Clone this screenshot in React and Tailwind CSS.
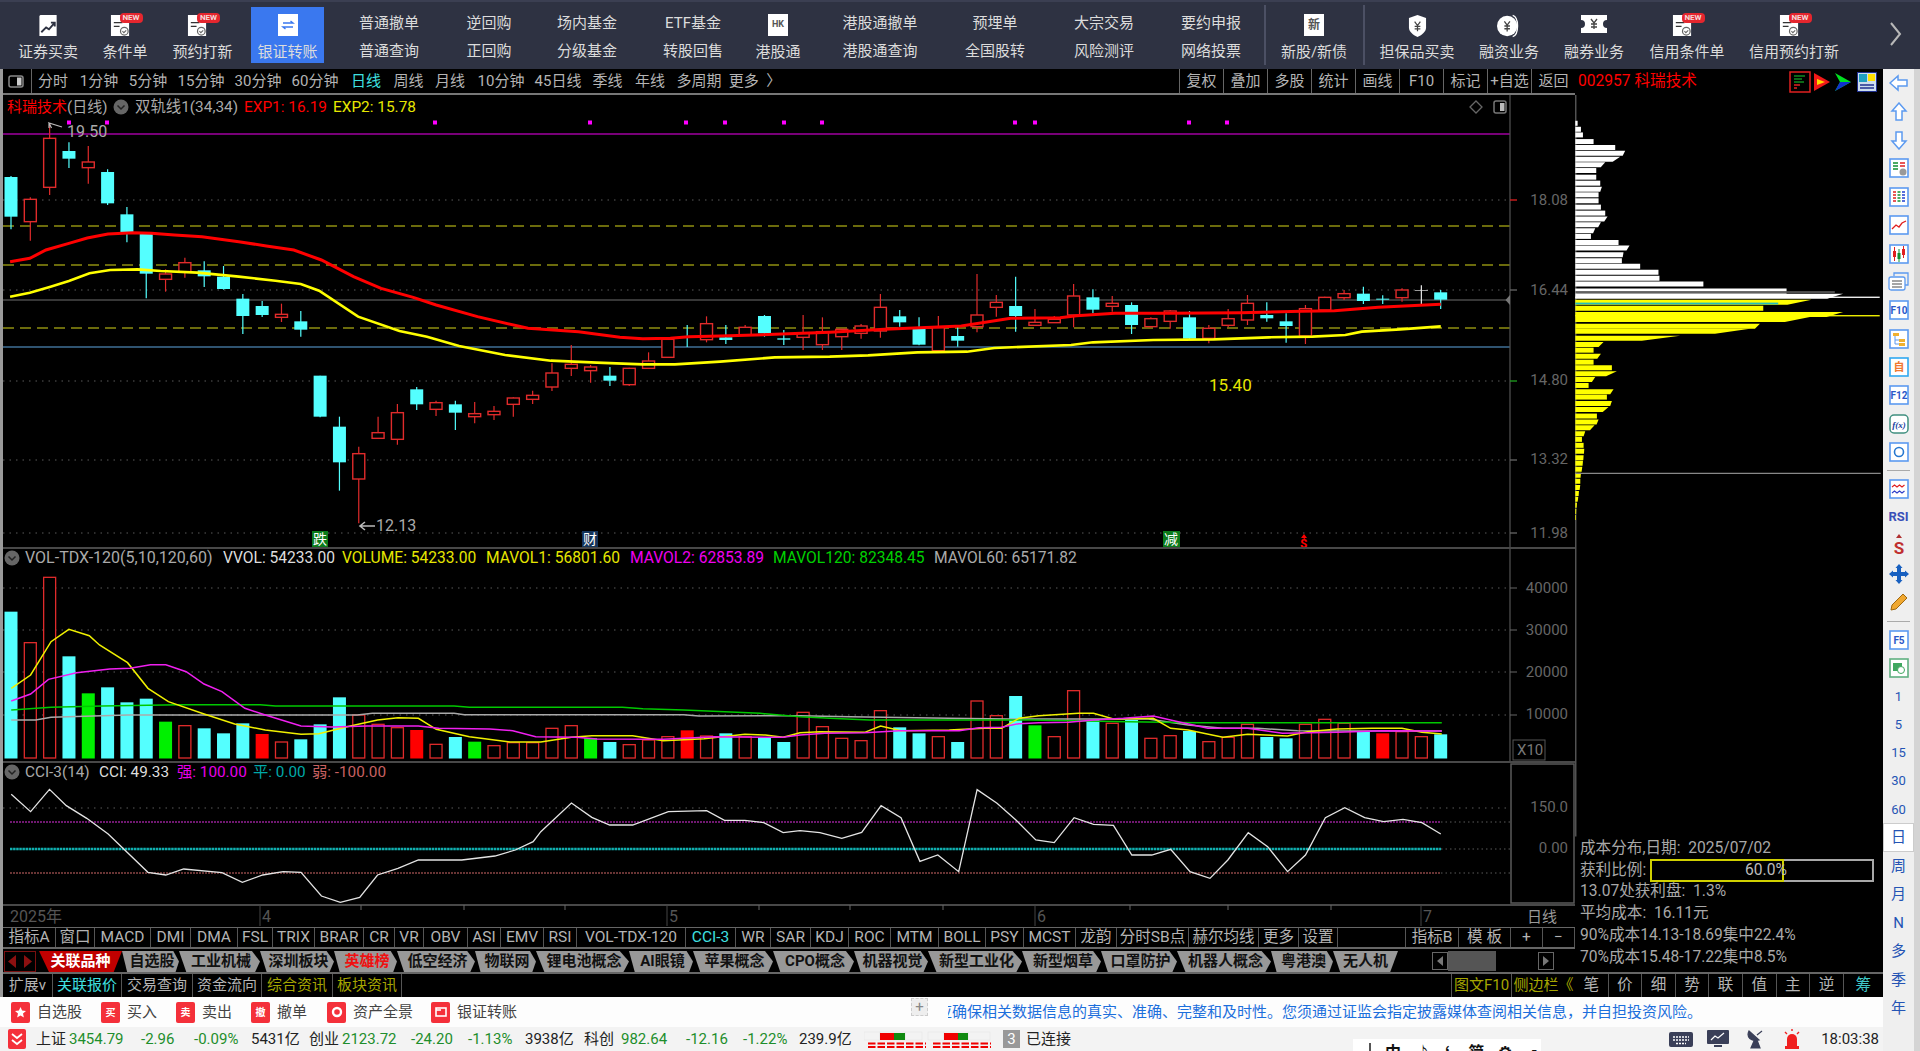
import React from "react";

const UP = "#e02b2b";
const CY = "#54ffff";

// [type, bodyTop, bodyBottom, wickTop, wickBottom]  y values read from the zoomed crops
const candlesA = [
  ["c",231,350,228,388],["r",298,365,292,422],["r",115,262,70,285],["c",153,176,127,204],["r",186,203,138,251],
  ["c",216,310,208,315],["c",343,397,321,427],["c",402,521,402,595],["r",522,538,508,575],["r",488,515,473,533],
  ["c",511,529,484,561],["c",530,567,498,569],["c",596,648,582,702],["c",618,645,603,651],["r",643,652,611,666],
  ["c",664,689,633,710],["c",827,950,827,952],["c",980,1087,950,1172],["r",1061,1137,1040,1270],["r",998,1015,950,1015],
  ["r",938,1018,912,1034],["c",868,913,861,930],["r",908,928,902,948],["c",913,938,902,990],["r",941,950,906,970],
  ["r",934,944,918,960],["r",894,913,892,950],["r",886,898,872,912],["r",819,861,790,873],["r",793,805,735,828],
  ["r",801,812,795,848],["c",827,842,801,858],["r",805,854,803,858],["r",783,805,757,806],["r",718,772,718,772],
  ["c",709,712,675,741],["r",671,719,649,727],
  ["c",712,720,675,732],["r",682,705,675,706],["c",648,700,645,710],["c",715,719,690,735],["r",698,712,645,750],
  ["r",695,734,652,750],["r",688,710,688,750],["r",678,700,672,716],["r",622,693,582,713],["c",649,667,630,680],
  ["c",685,734,652,736],["r",683,752,648,752],["c",708,722,680,740],["r",645,680,522,697],["r",607,622,585,650],
  ["c",618,648,530,695],["r",667,676,627,677],["r",658,668,648,668],["r",588,645,552,682],["c",592,629,568,640],
  ["r",610,619,588,635],["c",615,675,607,702],["r",656,680,652,682],["r",633,664,630,686],["c",652,716,633,718],
  ["r",685,715,675,730],["r",656,676,627,682],["r",610,660,585,675],["c",645,655,607,665],["c",664,678,640,728],
  ["r",626,708,615,732],["r",592,630,590,632],["r",581,593,570,600],["c",581,603,560,612],["c",596,599,586,612],
  ["r",570,593,565,605],["w",571,573,556,612],["c",577,599,570,627],
];

const volTops = [
  ["c",215],["r",308],["r",112],["c",349],["g",460],["c",442],["c",487],["c",476],["g",545],["r",557],["c",565],["c",580],
  ["c",550],["f",582],["r",606],["c",598],["c",553],["c",472],["r",525],["r",553],["r",563],["f",570],["r",613],["c",591],
  ["g",605],["r",617],["r",608],["r",608],["r",565],["r",557],["g",594],["c",606],["r",614],["r",600],["r",590],["f",571],
  ["r",588],["c",580],["r",590],["c",592],["c",606],["r",517],["r",560],["r",595],["r",602],["r",512],["c",562],["c",580],
  ["r",590],["c",606],["r",483],["r",527],["c",468],["g",556],["r",590],["r",452],["c",540],["r",550],["c",540],["r",595],
  ["r",587],["c",573],["r",605],["r",592],["r",553],["c",591],["c",595],["r",553],["r",538],["r",550],["c",575],["f",580],
  ["r",575],["r",590],["c",583],
];

const z8 = (x) => x / 2.178;
const z9 = (x) => x / 1.823 + 720;
const z10 = (x) => x / 1.96;
const z11 = (x) => x / 2.01 + 800;

const path1 = (a, fa, b, fb, off) =>
  [...a.map(([x, y]) => `${fa(x)},${y / 3 + off}`), ...b.map(([x, y]) => `${fb(x)},${y / 3 + off}`)].join(" ");

const redLine = path1(
  [[22,485],[65,475],[100,450],[150,430],[190,414],[235,402],[290,398],[330,400],[380,405],[440,410],[520,425],[580,438],[640,450],[700,480],[770,530],[830,565],[900,592],[950,615],[1040,650],[1150,685],[1260,695],[1350,712],[1400,716],[1460,715],[1500,710]],
  z8,
  [[0,708],[100,703],[200,697],[300,688],[440,678],[530,655],[620,653],[650,647],[720,640],[820,640],[950,638],[1060,634],[1120,632],[1200,622],[1314,613]],
  z9, 100
);
const yellowLine = path1(
  [[22,590],[65,578],[110,560],[150,543],[195,520],[240,510],[300,508],[350,513],[430,518],[520,530],[600,542],[655,552],[695,572],[780,650],[870,693],[930,710],[1000,738],[1100,765],[1200,782],[1300,788],[1400,793],[1470,793]],
  z8,
  [[0,785],[100,772],[200,770],[270,766],[360,757],[450,755],[500,744],[640,735],[680,727],[790,720],[900,718],[1000,712],[1080,710],[1140,705],[1170,695],[1240,688],[1314,679]],
  z9, 100
);
const mavol1 = path1(
  [[22,445],[60,405],[100,305],[135,268],[175,287],[195,315],[250,368],[290,445],[330,485],[400,522],[460,552],[520,570],[590,583],[625,581],[680,560],[740,540],[780,533],[820,535],[855,568],[920,590],[1000,606],[1060,606],[1120,592],[1160,587],[1240,587],[1300,602],[1380,596],[1460,583],[1500,585],[1535,592]],
  z10,
  [[0,578],[40,575],[130,577],[162,558],[203,572],[300,570],[370,565],[405,565],[440,535],[480,527],[560,520],[590,520],[630,537],[710,535],[745,565],[780,570],[850,592],[900,583],[980,588],[1020,575],[1080,567],[1150,565],[1210,565],[1250,577],[1290,582]],
  z11, 540
);
const mavol2 = path1(
  [[22,483],[60,462],[95,418],[150,398],[215,387],[255,385],[295,374],[325,374],[365,395],[400,432],[435,455],[480,505],[520,525],[590,558],[650,561],[720,558],[820,558],[860,565],[960,567],[1005,572],[1050,590],[1130,592],[1170,597],[1300,598],[1400,590],[1535,592]],
  z10,
  [[0,585],[50,580],[130,578],[200,572],[320,572],[360,563],[405,562],[440,551],[480,548],[540,547],[590,540],[650,535],[710,528],[760,545],[820,565],[900,565],[970,580],[1080,577],[1170,572],[1290,573]],
  z11, 540
);
const mavol120 = path1(
  [[22,510],[100,502],[200,498],[350,494],[510,494],[540,498],[890,498],[920,502],[1220,502],[1260,506],[1340,510],[1490,520]],
  z10,
  [[0,530],[60,535],[140,540],[460,540],[660,545],[800,548],[1290,548]],
  z11, 540
);
const mavol60 = path1(
  [[22,540],[70,540],[100,532],[250,525],[700,525],[730,520],[890,520],[910,524],[1340,524],[1370,528]],
  z10,
  [[0,527],[100,530],[300,535],[420,537],[700,537],[780,555],[850,565],[920,565],[1000,572],[1290,573]],
  z11, 540
);
const cciLine = path1(
  [[22,763],[60,815],[97,748],[130,797],[170,835],[212,882],[290,997],[325,1005],[360,987],[435,998],[475,1027],[515,1005],[555,995],[590,997],[630,1068],[667,1087],[705,1072],[740,1005],[780,985],[820,960],[905,960],[970,948],[1010,930],[1045,905],[1060,875],[1120,789],[1160,832],[1195,855],[1240,855],[1310,815],[1385,812],[1420,841],[1460,841],[1497,848],[1535,878]],
  z10,
  [[0,872],[40,878],[84,895],[124,877],[163,797],[203,833],[241,964],[277,945],[319,995],[356,749],[396,790],[434,840],[474,900],[511,908],[551,833],[590,853],[630,856],[667,945],[707,945],[745,928],[784,995],[824,1015],[860,960],[901,878],[940,920],[980,995],[1016,945],[1056,833],[1095,803],[1135,833],[1173,845],[1212,838],[1250,848],[1288,882]],
  z11, 540
);

const chipRows = [
  [70,52],[88,62],[105,68],[125,100],[143,165],[160,195],[178,180],[195,135],[212,108],[232,108],[250,120],[268,125],[285,115],[303,115],[322,122],[340,135],[358,142],[375,122],[393,105],[410,92],[428,175],[445,208],[465,190],[483,185],[500,240],[518,295],[536,298],[553,430],[574,680],[590,850],
  [608,755],[626,610],[645,850],[660,750],[680,600],[695,570],[716,360],[735,130],[752,100],[770,122],[788,100],[805,155],[823,170],[840,105],[858,85],[877,160],[893,140],[912,155],[930,145],[950,110],[968,115],[985,103],[1003,75],[1020,65],[1038,70],[1056,72],[1075,70],[1092,68],[1110,66],[1128,62],[1146,60],[1165,60],[1183,56],[1200,54],[1218,50],[1237,48],[1255,47],
];

const CollapseDot = ({ x, y }) => (
  <g>
    <circle cx={x} cy={y} r="7.5" fill="#666" />
    <path d={`M${x - 3.5} ${y - 1.5}l3.5 3.5l3.5 -3.5`} fill="none" stroke="#222" strokeWidth="1.5" />
  </g>
);

const MainChart = () => {
  const ticks = [200, 290, 381, 460, 533];
  const volGrid = [588, 630, 672, 715];
  return (
    <svg width="1572" height="832" viewBox="3 95 1572 832" className="block" fontFamily="Roboto, 'Noto Sans CJK SC', sans-serif" fontSize="15">
      {/* price grid */}
      {ticks.map((y) => (
        <line key={y} x1="3" x2="1510" y1={y} y2={y} stroke="#5a5a5a" strokeDasharray="1.5 5" />
      ))}
      <line x1="3" x2="1510" y1="134" y2="134" stroke="#a000a0" strokeWidth="1.6" />
      {[226, 265, 328].map((y) => (
        <line key={y} x1="3" x2="1510" y1={y} y2={y} stroke="#8f8f10" strokeWidth="1.3" strokeDasharray="11 6" />
      ))}
      <line x1="3" x2="1510" y1="300" y2="300" stroke="#4a4a4a" strokeWidth="1.3" />
      <line x1="3" x2="1510" y1="347" y2="347" stroke="#3f6f96" strokeWidth="1.4" />
      {[69, 107, 435, 590, 686, 725, 784, 822, 1015, 1035, 1189, 1227].map((x) => (
        <rect key={x} x={x - 2} y="120.5" width="4" height="4" fill="#ff00ff" />
      ))}

      {/* candles */}
      {candlesA.map(([t, top, bot, wt, wb], i) => {
        const x = 11 + i * 19.32;
        const c = t === "r" ? UP : t === "c" ? CY : "#e8e8e8";
        return (
          <g key={i}>
            <line x1={x} x2={x} y1={wt / 3 + 100} y2={wb / 3 + 100} stroke={c} strokeWidth="1.2" />
            {t === "r" ? (
              <rect x={x - 6} y={top / 3 + 100} width="12" height={(bot - top) / 3} fill="#000" stroke={c} strokeWidth="1.4" />
            ) : (
              <rect x={x - 6.5} y={top / 3 + 100} width="13" height={(bot - top) / 3} fill={c} />
            )}
          </g>
        );
      })}
      <polyline points={redLine} fill="none" stroke="#ff0000" strokeWidth="3" />
      <polyline points={yellowLine} fill="none" stroke="#ffff00" strokeWidth="2.6" />

      {/* price header */}
      <text x="7" y="112" fill="#ff0000">科瑞技术<tspan fill="#aaa">(日线)</tspan></text>
      <CollapseDot x={121} y={107} />
      <text x="135" y="112" fill="#aaa" fontSize="15.4">双轨线1(34,34)</text>
      <text x="244" y="112" fill="#ff0000" fontSize="15.4">EXP1: 16.19</text>
      <text x="333" y="112" fill="#e6e600" fontSize="15.4">EXP2: 15.78</text>

      {/* high / low marks */}
      <path d="M62 127L49 123l2.5 5M49 123l0 5" fill="none" stroke="#bbb" strokeWidth="1.2" />
      <text x="67" y="137" fill="#aaa" fontSize="16">19.50</text>
      <path d="M375 526h-15m5 -4l-5 4l5 4" fill="none" stroke="#bbb" strokeWidth="1.6" />
      <text x="376" y="531" fill="#aaa" fontSize="16">12.13</text>
      <text x="1209" y="391" fill="#e6e600" fontSize="17">15.40</text>

      {/* event tags */}
      <rect x="312" y="531" width="16" height="16" fill="#0a7a1a" />
      <text x="313" y="544" fill="#fff" fontSize="14">跌</text>
      <rect x="582" y="531" width="16" height="16" fill="#14345a" />
      <text x="583" y="544" fill="#fff" fontSize="14">财</text>
      <rect x="1163" y="531" width="17" height="16" fill="#0a7a1a" />
      <text x="1164" y="544" fill="#fff" fontSize="14">减</text>
      <path d="M1304 534l3 4h-6z" fill="#f00" />
      <text x="1300" y="548" fill="#f00" fontSize="13" fontWeight="700">$</text>

      {/* top right toggles */}
      <path d="M1476 101l6 6l-6 6l-6 -6z" fill="none" stroke="#666" strokeWidth="1.3" />
      <rect x="1494" y="101" width="12" height="12" rx="2" fill="none" stroke="#777" strokeWidth="1.5" />
      <rect x="1500" y="103" width="4.5" height="8" fill="#bbb" />

      {/* price axis */}
      <line x1="1510" x2="1510" y1="95" y2="762" stroke="#4d4d4d" strokeWidth="1.3" />
      {ticks.map((y, i) => (
        <line key={y} x1="1510" x2="1517" y1={y} y2={y} stroke={i === 0 ? "#e02020" : i === 2 ? "#20a020" : "#666"} strokeWidth="1.3" />
      ))}
      {[["18.08", 205], ["16.44", 295], ["14.80", 385], ["13.32", 464], ["11.98", 538]].map(([t, y]) => (
        <text key={t} x="1568" y={y} textAnchor="end" fill="#666">{t}</text>
      ))}
      <path d="M1510 295l-4.5 5l4.5 5z" fill="#777" />
      <line x1="3" x2="1575" y1="548" y2="548" stroke="#484848" strokeWidth="2" />

      {/* volume pane */}
      <CollapseDot x={12} y={558} />
      <g fontSize="15.6">
        <text x="25" y="563" fill="#aaa" fontSize="16">VOL-TDX-120(5,10,120,60)</text>
        <text x="223" y="563" fill="#ddd">VVOL: 54233.00</text>
        <text x="342" y="563" fill="#e6e600">VOLUME: 54233.00</text>
        <text x="486" y="563" fill="#e6e600">MAVOL1: 56801.60</text>
        <text x="630" y="563" fill="#f000f0">MAVOL2: 62853.89</text>
        <text x="773" y="563" fill="#00d000">MAVOL120: 82348.45</text>
        <text x="934" y="563" fill="#aaa">MAVOL60: 65171.82</text>
      </g>
      {volGrid.map((y) => (
        <line key={y} x1="3" x2="1510" y1={y} y2={y} stroke="#5a5a5a" strokeDasharray="1.5 5" />
      ))}
      {volTops.map(([t, top], i) => {
        const x = 11 + i * 19.32;
        const y = top / 3 + 540;
        if (t === "r") return <rect key={i} x={x - 6} y={y} width="12" height={758 - y} fill="#000" stroke={UP} strokeWidth="1.3" />;
        return <rect key={i} x={x - 6.5} y={y} width="13" height={758.5 - y} fill={t === "c" ? CY : t === "g" ? "#00f000" : "#ff0000"} />;
      })}
      <polyline points={mavol60} fill="none" stroke="#aaa" strokeWidth="1.5" />
      <polyline points={mavol120} fill="none" stroke="#00c800" strokeWidth="1.5" />
      <polyline points={mavol1} fill="none" stroke="#f0f000" strokeWidth="1.5" />
      <polyline points={mavol2} fill="none" stroke="#f020f0" strokeWidth="1.5" />
      {[["40000", 593, 588], ["30000", 635, 630], ["20000", 677, 672], ["10000", 719, 715]].map(([t, y, l]) => (
        <g key={t}>
          <line x1="1510" x2="1517" y1={l} y2={l} stroke="#666" />
          <text x="1568" y={y} textAnchor="end" fill="#666">{t}</text>
        </g>
      ))}
      <rect x="1513" y="740" width="32" height="20" fill="none" stroke="#555" />
      <text x="1517" y="755" fill="#777">X10</text>
      <line x1="3" x2="1575" y1="762" y2="762" stroke="#484848" strokeWidth="2" />

      {/* CCI pane */}
      <CollapseDot x={12} y={772} />
      <g fontSize="15.3">
        <text x="25" y="777" fill="#aaa">CCI-3(14)</text>
        <text x="99" y="777" fill="#ddd">CCI: 49.33</text>
        <text x="177" y="777" fill="#e800e8">强: 100.00</text>
        <text x="253" y="777" fill="#00a8a8">平: 0.00</text>
        <text x="312" y="777" fill="#c86060">弱: -100.00</text>
      </g>
      <line x1="3" x2="1510" y1="808" y2="808" stroke="#5a5a5a" strokeDasharray="1.5 5" />
      <line x1="1441" x2="1510" y1="822" y2="822" stroke="#5a5a5a" strokeDasharray="1.5 3" />
      <line x1="1441" x2="1510" y1="849" y2="849" stroke="#5a5a5a" strokeDasharray="1.5 3" />
      <line x1="1441" x2="1510" y1="873" y2="873" stroke="#5a5a5a" strokeDasharray="1.5 3" />
      <line x1="10" x2="1441" y1="822" y2="822" stroke="#e030e0" strokeWidth="1.2" strokeDasharray="2 1" />
      <line x1="10" x2="1441" y1="849" y2="849" stroke="#10b0b0" strokeWidth="2.4" strokeDasharray="2.5 0.6" />
      <line x1="10" x2="1441" y1="873" y2="873" stroke="#d06868" strokeWidth="1.2" strokeDasharray="2 1" />
      <polyline points={cciLine} fill="none" stroke="#e4e4e4" strokeWidth="1.3" />
      <rect x="1511" y="764" width="63" height="139" fill="none" stroke="#5a5a5a" strokeWidth="1.5" />
      <text x="1568" y="812" textAnchor="end" fill="#666">150.0</text>
      <text x="1568" y="853" textAnchor="end" fill="#666">0.00</text>

      {/* date axis */}
      <line x1="3" x2="1575" y1="905" y2="905" stroke="#484848" strokeWidth="2" />
      <text x="10" y="922" fill="#555" fontSize="16">2025年</text>
      {[[260, "4"], [667, "5"], [1035, "6"], [1421, "7"]].map(([x, t]) => (
        <g key={t}>
          <line x1={x} x2={x} y1="905" y2="926" stroke="#444" />
          <text x={x + 2} y="922" fill="#555" fontSize="16">{t}</text>
        </g>
      ))}
      {[361, 464, 565, 759, 850, 943, 1130, 1228, 1331].map((x) => (
        <line key={x} x1={x} x2={x} y1="905" y2="910" stroke="#666" />
      ))}
      <text x="1527" y="922" fill="#999">日线</text>
    </svg>
  );
};

const ChipChart = () => (
  <svg width="308" height="743" viewBox="1575 95 308 743" className="block">
    <line x1="1575.5" x2="1575.5" y1="95" y2="838" stroke="#666" strokeWidth="1.2" />
    {chipRows.map(([y, x], i) => {
      const top = 100 + y / 3 - 2.5;
      const end = 1560 + x / 3;
      const next = chipRows[i + 1] ? 1560 + chipRows[i + 1][1] / 3 : end;
      const low = (end + Math.min(end, next)) / 2;
      return <polygon key={y} points={`1575,${top} ${end},${top} ${low},${top + 5} 1575,${top + 5}`} fill={y < 600 ? "#fff" : "#ffff00"} />;
    })}
    <rect x="1575" y="291.5" width={825 / 3 - 15} height="1.8" fill="#555" />
    <rect x="1575" y="297" width={960 / 3 - 15} height="1.3" fill="#fff" />
    <rect x="1575" y="315.5" width={960 / 3 - 15} height="1.3" fill="#ffff00" />
    <rect x="1575" y="303" width={655 / 3 - 15} height="1.8" fill="#20c0c0" />
    <line x1="1575" x2="1881" y1="474" y2="474" stroke="#888" strokeWidth="1.3" />
  </svg>
);

const NewBadge = () => (
  <div className="absolute left-[10px] top-[6px] w-[23px] h-[10px] rounded-[4px] bg-[#e5262e] text-[#f4d8d8] text-[8px] leading-[10px] text-center font-bold">NEW</div>
);

const DocIcon = () => (
  <svg width="21" height="23" viewBox="0 0 22 24">
    <path d="M1 1h14l5 4v18H1z" fill="#fff" />
    <path d="M4 9h9M4 13h6" stroke="#333" strokeWidth="1.3" />
    <circle cx="15" cy="18" r="4" fill="#fff" stroke="#666" strokeWidth="1.3" />
    <path d="M13 18l1.5 1.5L17 17" fill="none" stroke="#666" strokeWidth="1.1" />
  </svg>
);

const TradeIcon = () => (
  <svg width="21" height="23" viewBox="0 0 21 24">
    <path d="M2 1h17v22H1V2z" fill="#fff" />
    <path d="M3 19l5 -5l3 2l6 -7m-4 0h4v4" fill="none" stroke="#2e3242" strokeWidth="2" />
  </svg>
);

const TransferIcon = () => (
  <svg width="20" height="22" viewBox="0 0 20 22">
    <rect width="20" height="22" fill="#fff" />
    <path d="M5 9h10l-2.5 -2M15 13H5l2.5 2" fill="none" stroke="#3a78ef" strokeWidth="1.4" />
  </svg>
);

const SquareText = ({ t, size }) => (
  <div className={`w-[20px] h-[22px] bg-white text-[#555] font-bold flex items-center justify-center ${size}`}>{t}</div>
);

const ShieldIcon = () => (
  <svg width="19" height="24" viewBox="0 0 20 25">
    <path d="M10 1l9 3v10c0 5 -5 8 -9 10c-4 -2 -9 -5 -9 -10V4z" fill="#fff" />
    <path d="M7 8l3 4l3 -4M10 12v6M7 13h6M7 15.5h6" fill="none" stroke="#444" strokeWidth="1.3" />
  </svg>
);

const CoinIcon = () => (
  <svg width="26" height="24" viewBox="0 0 26 26">
    <circle cx="11" cy="13" r="11" fill="#fff" />
    <path d="M17 1.5c7 2 7 21 0 23" fill="none" stroke="#fff" strokeWidth="1.5" />
    <path d="M8 8l3 4l3 -4M11 12v7M8 13h6M8 16h6" fill="none" stroke="#444" strokeWidth="1.4" />
  </svg>
);

const TicketIcon = () => (
  <svg width="26" height="20" viewBox="0 0 26 20">
    <path d="M0 1h26v5a4 4 0 0 0 0 8v5H0v-5a4 4 0 0 0 0 -8z" fill="#fff" />
    <path d="M10 5l3 4l3 -4M13 9v6M10 10h6M10 13h6" fill="none" stroke="#444" strokeWidth="1.3" />
  </svg>
);

const ToolIcon = ({ label, icon, badge, className, active }) => (
  <div className={`h-[56px] mt-[7px] shrink-0 flex flex-col items-center ${active ? "bg-[#3a78ef]" : ""} ${className}`}>
    <div className={`relative h-[33px] pt-[7px] flex items-start ${badge ? "-ml-[10px]" : ""}`}>
      {icon}
      {badge && <NewBadge />}
    </div>
    <div className="mt-[2px] text-[15px] leading-[20px] whitespace-nowrap">{label}</div>
  </div>
);

const ToolPair = ({ a, b, className }) => (
  <div className={`h-[69px] shrink-0 flex flex-col items-center text-[15px] leading-[20px] whitespace-nowrap ${className}`}>
    <div className="mt-[13px]">{a}</div>
    <div className="mt-[8px]">{b}</div>
  </div>
);

const Toolbar = () => (
  <div className="h-[69px] shrink-0 flex bg-[#2e3242] border-t-2 border-t-[#3b3f52] box-border text-[#dcdcdc]">
    <div className="flex -mt-[2px] w-full">
      <ToolIcon className="w-[96px]" label="证券买卖" icon={<TradeIcon />} />
      <ToolIcon className="w-[58px]" label="条件单" icon={<DocIcon />} badge />
      <ToolIcon className="w-[97px]" label="预约打新" icon={<DocIcon />} badge />
      <ToolIcon className="w-[73px]" label="银证转账" icon={<TransferIcon />} active />
      <ToolPair className="w-[130px]" a="普通撤单" b="普通查询" />
      <ToolPair className="w-[70px]" a="逆回购" b="正回购" />
      <ToolPair className="w-[126px]" a="场内基金" b="分级基金" />
      <ToolPair className="w-[86px]" a="ETF基金" b="转股回售" />
      <ToolIcon className="w-[84px]" label="港股通" icon={<SquareText t="HK" size="text-[9px]" />} />
      <ToolPair className="w-[120px]" a="港股通撤单" b="港股通查询" />
      <ToolPair className="w-[110px]" a="预埋单" b="全国股转" />
      <ToolPair className="w-[108px]" a="大宗交易" b="风险测评" />
      <ToolPair className="w-[106px]" a="要约申报" b="网络投票" />
      <div className="w-[2px] h-[60px] mt-[5px] shrink-0 bg-[#4c5064]" />
      <ToolIcon className="w-[96px]" label="新股/新债" icon={<SquareText t="新" size="text-[12px]" />} />
      <div className="w-[2px] h-[60px] mt-[5px] shrink-0 mx-[1px] bg-[#4c5064]" />
      <ToolIcon className="w-[102px]" label="担保品买卖" icon={<ShieldIcon />} />
      <ToolIcon className="w-[82px]" label="融资业务" icon={<CoinIcon />} />
      <ToolIcon className="w-[88px]" label="融券业务" icon={<TicketIcon />} />
      <ToolIcon className="w-[98px]" label="信用条件单" icon={<DocIcon />} badge />
      <ToolIcon className="w-[116px]" label="信用预约打新" icon={<DocIcon />} badge />
      <div className="flex-1 flex items-center pl-[38px] pb-[1px]">
        <svg width="12" height="24" viewBox="0 0 12 24"><path d="M1 1l9 11l-9 11" fill="none" stroke="#b8b8b8" strokeWidth="2" /></svg>
      </div>
    </div>
  </div>
);

const periods = [
  ["分时", "w-[42px]"], ["1分钟", "w-[50px]"], ["5分钟", "w-[48px]"], ["15分钟", "w-[58px]"], ["30分钟", "w-[56px]"],
  ["60分钟", "w-[58px]"], ["日线", "w-[44px] text-[#3fe0e0]"], ["周线", "w-[41px]"], ["月线", "w-[42px]"], ["10分钟", "w-[60px]"],
  ["45日线", "w-[54px]"], ["季线", "w-[45px]"], ["年线", "w-[40px]"], ["多周期", "w-[58px]"], ["更多  〉", "w-[54px]"],
];

const PeriodBar = () => (
  <div className="h-[26px] shrink-0 flex items-stretch border-b-2 border-[#777] box-border text-[15px] text-[#b4b4b4] bg-black">
    <div className="w-[29px] flex items-center pl-[5px] border-r border-[#666]">
      <svg width="16" height="13" viewBox="0 0 16 13">
        <rect x="1" y="1" width="14" height="11" rx="2" fill="none" stroke="#888" strokeWidth="1.5" />
        <rect x="9" y="2.5" width="4.5" height="8" fill="#ccc" />
      </svg>
    </div>
    {periods.map(([t, c]) => (
      <div key={t} className={`flex items-center justify-center whitespace-pre ${c}`}>{t}</div>
    ))}
    <div className="ml-auto flex">
      {["复权", "叠加", "多股", "统计", "画线", "F10", "标记", "+自选", "返回"].map((t) => (
        <div key={t} className="w-[44px] border-l border-[#666] flex items-center justify-center whitespace-nowrap overflow-hidden">{t}</div>
      ))}
    </div>
  </div>
);

const indicators = [
  ["指标A", "w-[53px]"], ["窗口", "w-[39px]"], ["MACD", "w-[56px]"], ["DMI", "w-[40px]"], ["DMA", "w-[47px]"], ["FSL", "w-[35px]"],
  ["TRIX", "w-[42px]"], ["BRAR", "w-[49px]"], ["CR", "w-[31px]"], ["VR", "w-[29px]"], ["OBV", "w-[44px]"], ["ASI", "w-[33px]"],
  ["EMV", "w-[43px]"], ["RSI", "w-[33px]"], ["VOL-TDX-120", "w-[109px]"], ["CCI-3", "w-[50px] text-[#3fe0e0]"], ["WR", "w-[35px]"],
  ["SAR", "w-[40px]"], ["KDJ", "w-[38px]"], ["ROC", "w-[42px]"], ["MTM", "w-[48px]"], ["BOLL", "w-[47px]"], ["PSY", "w-[38px]"],
  ["MCST", "w-[52px]"], ["龙韵", "w-[41px]"], ["分时SB点", "w-[72px]"], ["赫尔均线", "w-[70px]"], ["更多", "w-[40px]"], ["设置", "w-[39px]"],
  ["", "w-[68px]"], ["指标B", "w-[53px]"], ["模 板", "w-[52px]"], ["+", "w-[32px]"], ["−", "w-[32px]"],
];

const IndicatorBar = () => (
  <div className="h-[22px] shrink-0 flex border-t border-b-2 border-[#666] box-border text-[15.5px] text-[#b4b4b4]">
    {indicators.map(([t, c], i) => (
      <div key={i} className={`flex items-center justify-center whitespace-nowrap border-r border-[#555] box-border ${c}`}>{t}</div>
    ))}
  </div>
);

const sectorTabs = [
  ["自选股", "w-[57px]"], ["工业机械", "w-[81px]"], ["深圳板块", "w-[74px]"], ["英雄榜", "w-[63px] text-[#f01010]"], ["低空经济", "w-[78px]"],
  ["物联网", "w-[61px]"], ["锂电池概念", "w-[93px]"], ["AI眼镜", "w-[64px]"], ["苹果概念", "w-[80px]"], ["CPO概念", "w-[81px]"],
  ["机器视觉", "w-[74px]"], ["新型工业化", "w-[94px]"], ["新型烟草", "w-[79px]"], ["口罩防护", "w-[76px]"], ["机器人概念", "w-[94px]"], ["粤港澳", "w-[62px]"],
];

const SectorTabs = () => (
  <div className="h-[25px] shrink-0 flex items-start pt-[2px] border-b-2 border-[#666] box-border text-[15px] font-bold text-[#111] bg-black">
    <div className="w-[32px] ml-[1px] h-[21px] border border-[#7a1010] flex items-center justify-center gap-[3px]">
      <svg width="26" height="13" viewBox="0 0 26 13"><path d="M9 0v13L1 6.5zM17 0v13l8 -6.5z" fill="#8c1010" /></svg>
    </div>
    <div className="w-[83px] ml-[3px] h-[21px] bg-[#c00000] text-white flex items-center justify-center whitespace-nowrap [clip-path:polygon(0_0,100%_0,90%_100%,12%_100%)]">关联品种</div>
    {sectorTabs.map(([t, c]) => (
      <div key={t} className={`h-[21px] bg-[#989898] flex items-center justify-center whitespace-nowrap pl-[3px] [clip-path:polygon(0_0,90%_0,100%_50%,94%_100%,9%_100%)] ${c}`}>{t}</div>
    ))}
    <div className="w-[65px] h-[21px] bg-[#989898] flex items-center justify-center whitespace-nowrap [clip-path:polygon(0_0,100%_0,88%_100%,11%_100%)]">无人机</div>
    <div className="ml-[34px] w-[16px] h-[18px] mt-[1px] border border-[#666] flex items-center justify-center">
      <svg width="6" height="10" viewBox="0 0 6 10"><path d="M6 0v10L0 5z" fill="#777" /></svg>
    </div>
    <div className="w-[48px] h-[20px] bg-[#555]" />
    <div className="ml-[42px] w-[16px] h-[18px] mt-[1px] border border-[#666] flex items-center justify-center">
      <svg width="6" height="10" viewBox="0 0 6 10"><path d="M0 0v10l6 -5z" fill="#777" /></svg>
    </div>
  </div>
);

const InfoTabs = () => (
  <div className="h-[23px] shrink-0 flex text-[15px] text-[#b4b4b4]">
    {[
      ["扩展v", "w-[50px]"], ["关联报价", "w-[69px] text-[#3fe0e0]"], ["交易查询", "w-[71px]"], ["资金流向", "w-[69px]"],
      ["综合资讯", "w-[71px] text-[#a6a600]"], ["板块资讯", "w-[69px] text-[#a6a600]"],
    ].map(([t, c]) => (
      <div key={t} className={`flex items-center justify-center whitespace-nowrap border-r border-[#555] box-border ${c}`}>{t}</div>
    ))}
    <div className="ml-auto flex text-[#a6a600]">
      <div className="w-[60px] border-l border-[#555] flex items-center justify-center whitespace-nowrap">图文F10</div>
      <div className="w-[64px] border-l border-[#555] flex items-center justify-center whitespace-nowrap overflow-hidden">侧边栏《</div>
    </div>
  </div>
);

const RightPanel = () => (
  <div className="w-[308px] shrink-0 flex flex-col text-[15.6px] text-[#a8a8a8]">
    <div className="h-[26px] shrink-0 flex items-center pl-[3px] text-[#ff0000]">
      <span>002957 科瑞技术</span>
      <div className="ml-auto flex items-center pr-[6px]">
        <svg width="22" height="22" viewBox="0 0 22 22">
          <rect x="1" y="1" width="20" height="20" fill="none" stroke="#e02020" strokeWidth="1.5" />
          <path d="M5 5h11M5 8h8M5 11h10" stroke="#108a20" strokeWidth="1.5" />
          <path d="M5 14h6M5 17h3" stroke="#e02020" strokeWidth="1.5" />
        </svg>
        <svg className="ml-[2px]" width="18" height="20" viewBox="0 0 18 20"><path d="M1 1l16 9L1 19z" fill="#f01818" /><path d="M4 7l8 3l-8 3z" fill="#ffd800" /></svg>
        <svg className="ml-[3px]" width="18" height="20" viewBox="0 0 18 20"><path d="M1 1l16 9L1 19l5 -9z" fill="#00e020" /><path d="M6 10l11 0L1 19z" fill="#1030d0" /></svg>
        <svg className="ml-[5px]" width="20" height="20" viewBox="0 0 20 20">
          <rect x="0.5" y="0.5" width="19" height="19" fill="#cde" stroke="#203090" />
          <rect x="2" y="2" width="8" height="8" fill="#20a0c0" />
          <rect x="11" y="2" width="7" height="7" fill="#ffe000" />
          <path d="M3 13h14M3 16h14" stroke="#203090" strokeWidth="1.5" />
        </svg>
      </div>
    </div>
    <ChipChart />
    <div className="h-[135px] shrink-0 flex flex-col pl-[5px] pt-[1px]">
      <div className="h-[21.8px] shrink-0 flex items-center whitespace-pre">成本分布,日期:  2025/07/02</div>
      <div className="h-[21.8px] shrink-0 flex items-center whitespace-nowrap">
        <span className="w-[70px]">获利比例:</span>
        <div className="relative w-[224px] h-[23px] border-2 border-[#a8a8a8] box-border flex items-center justify-center">
          <div className="absolute -left-[2px] -top-[2px] w-[134px] h-[23px] border-2 border-[#d0d000] box-border" />
          <span className="relative left-[4px] text-[#bbb]">60.0%</span>
        </div>
      </div>
      {["13.07处获利盘:  1.3%", "平均成本:  16.11元", "90%成本14.13-18.69集中22.4%", "70%成本15.48-17.22集中8.5%"].map((t) => (
        <div key={t} className="h-[21.8px] shrink-0 flex items-center whitespace-pre">{t}</div>
      ))}
    </div>
    <div className="flex-1 flex border-t-2 border-[#666] box-border text-[#b4b4b4]">
      {["笔", "价", "细", "势", "联", "值", "主", "逆"].map((t) => (
        <div key={t} className="w-[33.6px] flex items-center justify-center border-r border-[#555]">{t}</div>
      ))}
      <div className="flex-1 flex items-center justify-center text-[#3fc8c8]">筹</div>
    </div>
  </div>
);

const BoxIcon = ({ children, stroke = "#5c9af0" }) => (
  <svg width="20" height="20" viewBox="0 0 20 20">
    <rect x="1" y="1" width="18" height="18" fill="#fff" stroke={stroke} strokeWidth="1.6" />
    {children}
  </svg>
);

const Arrow = ({ d }) => (
  <svg width="20" height="20" viewBox="0 0 20 20"><path d={d} fill="#fff" stroke="#5c9af0" strokeWidth="1.5" /></svg>
);

const BoxText = ({ t, c = "#2a58c8", size = "10" }) => (
  <text x="10" y="14" textAnchor="middle" fill={c} fontSize={size} fontWeight="700" fontFamily="Roboto, 'Noto Sans CJK SC', sans-serif">{t}</text>
);

const sideTop = [
  <Arrow d="M1 10l8 -7v4h9v6H9v4z" />,
  <Arrow d="M10 1l7 8h-4v9H7V9H3z" />,
  <Arrow d="M10 19l7 -8h-4V2H7v9H3z" />,
  <BoxIcon><path d="M4 5h5M4 8h5M4 11h5" stroke="#109030" strokeWidth="1.5" /><path d="M11 5h5M11 8h5" stroke="#e02020" strokeWidth="1.5" /><circle cx="14" cy="14" r="3.5" fill="#999" /></BoxIcon>,
  <BoxIcon><path d="M4 5h3M4 8h3M4 11h3M4 14h3" stroke="#e02020" strokeWidth="1.6" /><path d="M8.5 5h3M8.5 8h3M8.5 11h3M8.5 14h3" stroke="#109030" strokeWidth="1.6" /><path d="M13 5h3M13 8h3M13 11h3M13 14h3" stroke="#2040d0" strokeWidth="1.6" /></BoxIcon>,
  <BoxIcon><path d="M3 14l4 -4l3 2l3 -4l4 -2" fill="none" stroke="#e02020" strokeWidth="1.3" /></BoxIcon>,
  <svg width="20" height="20" viewBox="0 0 20 20"><rect x="1" y="1" width="18" height="18" fill="#fff" stroke="#5c9af0" strokeWidth="1.6" /><path d="M5.5 3v14" stroke="#e02020" /><rect x="4" y="7" width="3" height="6" fill="#e02020" /><path d="M10 5v13" stroke="#109030" /><rect x="8.5" y="9" width="3" height="6" fill="#109030" /><path d="M14.5 2v12" stroke="#e02020" /><rect x="13" y="5" width="3" height="6" fill="#e02020" /></svg>,
  <svg width="22" height="20" viewBox="0 0 22 20"><path d="M6 4V1h14v12h-3" fill="none" stroke="#5c9af0" strokeWidth="1.3" /><rect x="1" y="5" width="16" height="13" rx="2" fill="#fff" stroke="#5c9af0" strokeWidth="1.3" /><path d="M4 9h10M4 12h10M4 15h10" stroke="#888" strokeWidth="1.3" /></svg>,
  <BoxIcon><BoxText t="F10" /></BoxIcon>,
  <BoxIcon><rect x="4" y="4" width="6" height="3" fill="#f0b030" /><rect x="10" y="10" width="6" height="3" fill="#f0b030" /><rect x="10" y="14" width="6" height="3" fill="#f0b030" /><path d="M6 7v8h4M6 11h4" fill="none" stroke="#5c9af0" /></BoxIcon>,
  <BoxIcon stroke="#30a8f0"><BoxText t="自" c="#f07830" size="11" /></BoxIcon>,
  <BoxIcon><BoxText t="F12" /></BoxIcon>,
  <svg width="20" height="20" viewBox="0 0 20 20"><rect x="1" y="1" width="18" height="18" rx="4" fill="#fff" stroke="#409080" strokeWidth="1.5" /><text x="10" y="14" textAnchor="middle" fill="#1840a0" fontSize="9" fontStyle="italic" fontWeight="700" fontFamily="'Liberation Serif', serif">f(x)</text></svg>,
  <BoxIcon><circle cx="10" cy="10" r="4.5" fill="none" stroke="#2878d0" strokeWidth="1.6" /></BoxIcon>,
];

const sideMid = [
  <BoxIcon><path d="M3 8l2.5 -2l2.5 2l2.5 -2l2.5 2l2.5 -2" fill="none" stroke="#e02020" strokeWidth="1.2" /><path d="M3 14l2.5 -2l2.5 2l2.5 -2l2.5 2l2.5 -2" fill="none" stroke="#3040c8" strokeWidth="1.2" /></BoxIcon>,
  <span className="text-[13px] font-bold text-[#3a50b8]">RSI</span>,
  <svg width="18" height="22" viewBox="0 0 18 22"><path d="M9 0l3 4H6z" fill="#b03030" /><text x="9" y="20" textAnchor="middle" fill="#c03030" fontSize="17" fontWeight="700" fontFamily="Roboto, sans-serif">S</text></svg>,
  <svg width="20" height="20" viewBox="0 0 20 20"><path d="M10 0l3.5 4H12v4h4V6.5L20 10l-4 3.5V12h-4v4h1.5L10 20l-3.5 -4H8v-4H4v1.5L0 10l4 -3.5V8h4V4H6.5z" fill="#1860c0" /></svg>,
  <svg width="20" height="20" viewBox="0 0 20 20"><path d="M14 2l4 4L7 17l-5 1l1 -5z" fill="#f0a830" stroke="#a06810" /></svg>,
];

const Sidebar = () => (
  <div className="w-[37px] shrink-0 bg-[#efefef] flex flex-col border-r-[6px] border-[#d4d4d4] box-border text-[#2454b4]">
    {sideTop.map((ic, i) => (
      <div key={i} className="h-[28.4px] flex items-center justify-center">{ic}</div>
    ))}
    <div className="h-[8px] flex items-center px-[4px]"><div className="w-full h-[1px] bg-[#aaa]" /></div>
    {sideMid.map((ic, i) => (
      <div key={i} className="h-[28.4px] flex items-center justify-center">{ic}</div>
    ))}
    <div className="h-[10px] flex items-center px-[4px]"><div className="w-full h-[1px] bg-[#aaa]" /></div>
    <div className="h-[28px] flex items-center justify-center"><BoxIcon><BoxText t="F5" /></BoxIcon></div>
    <div className="h-[28px] flex items-center justify-center">
      <BoxIcon stroke="#60b080"><rect x="4" y="5" width="9" height="8" fill="#40a860" /><circle cx="12" cy="12" r="3.5" fill="#fff" stroke="#40a860" /></BoxIcon>
    </div>
    {["1", "5", "15", "30", "60"].map((t) => (
      <div key={t} className="h-[28.2px] flex items-center justify-center text-[13px]">{t}</div>
    ))}
    <div className="h-[28.5px] flex items-center justify-center text-[15px] bg-white border border-[#ccc] box-border">日</div>
    {["周", "月", "N", "多", "季", "年"].map((t) => (
      <div key={t} className="h-[28.5px] flex items-center justify-center text-[15px]">{t}</div>
    ))}
  </div>
);

const RedIcon = ({ children }) => (
  <div className="w-[19px] h-[21px] bg-[#f4303a] text-white text-[10px] font-bold flex items-center justify-center rounded-[2px]">{children}</div>
);

const quickActions = [
  ["自选股", "w-[90px]", <svg key="s" width="11" height="11" viewBox="0 0 11 11"><path d="M5.5 0l1.6 3.6l3.9 .4l-3 2.5l.9 3.9l-3.4 -2l-3.4 2l.9 -3.9l-3 -2.5l3.9 -.4z" fill="#fff" /></svg>],
  ["买入", "w-[75px]", "买"],
  ["卖出", "w-[75px]", "卖"],
  ["撤单", "w-[76px]", "撤"],
  ["资产全景", "w-[104px]", <svg key="c" width="12" height="12" viewBox="0 0 12 12"><circle cx="6" cy="6" r="4" fill="none" stroke="#fff" strokeWidth="2.4" /></svg>],
  ["银证转账", "w-[90px]", <svg key="b" width="12" height="10" viewBox="0 0 12 10"><rect x="1" y="1" width="10" height="8" fill="none" stroke="#fff" strokeWidth="1.6" /><path d="M1 3h5" stroke="#fff" strokeWidth="1.6" /></svg>],
];

const GRN = "text-[#1e8e2c]";
const marketStats = [
  ["上证", "w-[33px]"], ["3454.79", `w-[72px] ${GRN}`], ["-2.96", `w-[53px] ${GRN}`], ["-0.09%", `w-[57px] ${GRN}`], ["5431亿", "w-[58px]"],
  ["创业", "w-[33px]"], ["2123.72", `w-[69px] ${GRN}`], ["-24.20", `w-[57px] ${GRN}`], ["-1.13%", `w-[57px] ${GRN}`], ["3938亿", "w-[59px]"],
  ["科创", "w-[37px]"], ["982.64", `w-[65px] ${GRN}`], ["-12.16", `w-[57px] ${GRN}`], ["-1.22%", `w-[56px] ${GRN}`], ["239.9亿", "w-[65px]"],
];

const MiniBars = () => (
  <svg width="139" height="22" viewBox="864 1028 139 22" className="shrink-0">
    {[864, 880, 905, 928, 944, 968].map((x, i) => (
      <rect key={i} x={x} y="1032" width={[16, 25, 17, 16, 24, 22][i]} height="8" fill="none" stroke="#e8e8e8" strokeWidth="0.8" />
    ))}
    <rect x="880" y="1033" width="14" height="7" fill="#f00000" />
    <rect x="894" y="1033" width="11" height="7" fill="#108a10" />
    <rect x="944" y="1033" width="14" height="7" fill="#f00000" />
    <rect x="958" y="1033" width="10" height="7" fill="#108a10" />
    <path d="M868 1043.5h58M868 1047h58M933 1043.5h58M933 1047h58" stroke="#f00000" strokeWidth="2" strokeDasharray="7.5 2" />
  </svg>
);

const StatusBar = () => (
  <div className="h-[54px] shrink-0 flex flex-col bg-[#fdfdfd] text-[15px] text-[#444]">
    <div className="h-[30px] shrink-0 flex items-center pl-[11px]">
      {quickActions.map(([t, c, ic]) => (
        <div key={t} className={`flex items-center gap-[7px] whitespace-nowrap shrink-0 ${c}`}>
          <RedIcon>{ic}</RedIcon>
          <span>{t}</span>
        </div>
      ))}
      <div className="ml-[390px] self-start w-[17px] h-[18px] mt-[1px] bg-[#eee] border border-dashed border-[#ccc] flex items-center justify-center text-[#888] leading-none">+</div>
      <div className="ml-[20px] w-[746px] overflow-hidden whitespace-nowrap text-[#1c6fdc]">
        <span className="-ml-[11px] inline-block">应确保相关数据信息的真实、准确、完整和及时性。您须通过证监会指定披露媒体查阅相关信息，并自担投资风险。</span>
      </div>
    </div>
    <div className="flex-1 flex items-center bg-[#f3f3f3] text-[#222]">
      <div className="ml-[8px] mr-[10px] shrink-0 w-[18px] h-[20px] bg-[#f4303a] flex items-center justify-center rounded-[2px]">
        <svg width="12" height="13" viewBox="0 0 12 13"><path d="M1 1l5 4l5 -4M1 7l5 4l5 -4" fill="none" stroke="#fff" strokeWidth="1.8" /></svg>
      </div>
      {marketStats.map(([t, c]) => (
        <div key={t + c} className={`shrink-0 whitespace-nowrap ${c}`}>{t}</div>
      ))}
      <MiniBars />
      <div className="w-[17px] h-[18px] shrink-0 bg-[#999] text-white flex items-center justify-center">3</div>
      <div className="ml-[6px] whitespace-nowrap">已连接</div>
      <div className="ml-auto flex items-center pr-[4px]">
        <div className="w-[37px] flex justify-center">
          <svg width="24" height="15" viewBox="0 0 24 15"><rect width="24" height="15" rx="2" fill="#3a3f58" /><path d="M4 5h16M4 8h16M7 11.5h10" stroke="#fff" strokeWidth="1.6" strokeDasharray="2 1" /></svg>
        </div>
        <div className="w-[37px] flex justify-center">
          <svg width="22" height="18" viewBox="0 0 22 18"><rect width="22" height="14" rx="1" fill="#3a3f58" /><path d="M4 10l4 -4l3 2l6 -5" fill="none" stroke="#fff" strokeWidth="1.2" /><path d="M7 16h8" stroke="#3a3f58" strokeWidth="2" /></svg>
        </div>
        <div className="w-[37px] flex justify-center">
          <svg width="18" height="20" viewBox="0 0 18 20"><path d="M3 2c-3 6 2 11 10 9zM8 12l-3 7h9l-3 -8zM11 6l5 -4" fill="#3a3f58" stroke="#3a3f58" strokeWidth="1.2" /></svg>
        </div>
        <div className="w-[37px] flex justify-center">
          <svg width="18" height="20" viewBox="0 0 18 20"><path d="M4 18v-8a5 5 0 0 1 10 0v8z" fill="#f02020" /><rect x="2" y="17" width="14" height="3" fill="#f02020" /><path d="M9 0v2M2 3l2 2M16 3l-2 2" stroke="#f02020" strokeWidth="1.4" /></svg>
        </div>
        <div className="ml-[11px] text-[#222]">18:03:38</div>
      </div>
    </div>
  </div>
);

const App = () => (
  <div className="relative w-[1920px] h-[1051px] overflow-hidden flex flex-col bg-black font-[Roboto,'Noto_Sans_CJK_SC',sans-serif]">
    <Toolbar />
    <div className="flex-1 flex min-h-0">
      <div className="w-[1883px] shrink-0 flex flex-col">
        <div className="h-[928px] shrink-0 flex bg-black">
          <div className="w-[1575px] shrink-0 flex flex-col border-l-[3px] border-[#9a9a9a] box-border">
            <PeriodBar />
            <MainChart />
            <IndicatorBar />
            <SectorTabs />
            <InfoTabs />
          </div>
          <RightPanel />
        </div>
        <StatusBar />
      </div>
      <Sidebar />
    </div>
    {/* IME floating bar sits over the status row, cut by the window edge */}
    <div className="absolute left-[1353px] top-[1039px] w-[188px] h-[12px] bg-white overflow-hidden flex items-start gap-[14px] pl-[16px] pt-[4px] text-[16px] leading-[20px] font-bold text-[#111]">
      <span className="border border-[#555] w-[17px] h-[16px]" />
      <span>中</span>
      <span>♪</span>
      <span>ʻ,</span>
      <span>简</span>
      <span>⚙</span>
      <span>▪</span>
    </div>
  </div>
);

export default App;
